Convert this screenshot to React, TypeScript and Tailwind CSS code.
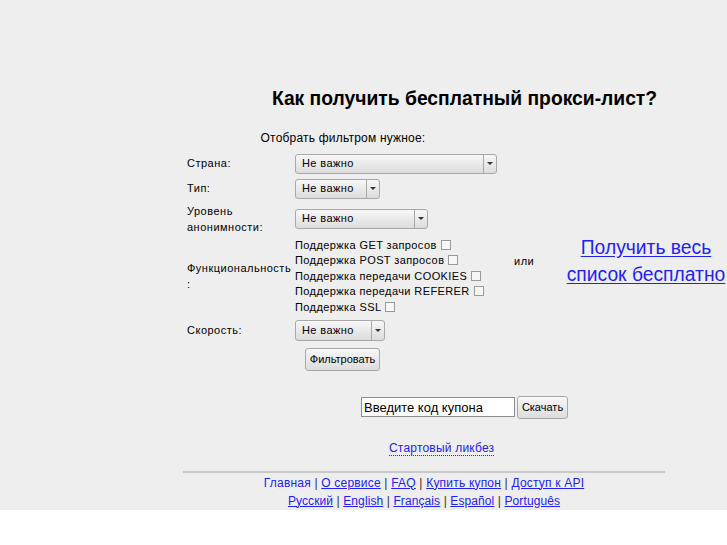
import { FunctionComponent } from "react";

const sans = "font-['Liberation_Sans',Arial,sans-serif]";

interface SelectProps {
  width: string;
}

const FakeSelect: FunctionComponent<SelectProps> = ({ width }) => (
  <div
    className={`${width} h-[20px] flex items-stretch border border-[#a9a9a9] rounded-[3px] bg-gradient-to-b from-[#f7f7f7] to-[#dcdcdc]`}
  >
    <div className="flex-1 flex items-center pl-[6px] text-[11px] tracking-[0.4px] text-black">Не важно</div>
    <div className="w-[13px] border-l border-[#a9a9a9] flex items-center justify-center">
      <span className="block w-0 h-0 border-l-[3px] border-r-[3px] border-t-[3px] border-l-transparent border-r-transparent border-t-[#333]" />
    </div>
  </div>
);

const Check: FunctionComponent<{ label: string }> = ({ label }) => (
  <div className="flex items-center h-[15.5px]">
    <span>{label}</span>
    <span className="ml-[4px] inline-block w-[10px] h-[10px] border border-[#9a9a9a] bg-[#f6f6f6]" />
  </div>
);

const footerLinks = ["О сервисе", "FAQ", "Купить купон", "Доступ к API"];
const langs = ["Русский", "English", "Français", "Español", "Português"];

const btn =
  "h-[23px] border border-[#a9a9a9] rounded-[3px] bg-gradient-to-b from-[#f7f7f7] to-[#dcdcdc] text-[11px] text-black";

export default function App() {
  return (
    <div className={`w-full min-h-[545px] bg-white overflow-hidden ${sans}`}>
      <div className="bg-[#eeeeee] h-[510px] pl-[183px] pt-[86px]">
        <div className="w-[563px]">
          <h1 className="text-center text-[19.3px] leading-[26px] font-bold text-black">
            Как получить бесплатный прокси-лист?
          </h1>

          <div className="flex mt-[18px]">
            {/* form column */}
            <div className="w-[320px] text-[11px] tracking-[0.5px] text-black">
              <div className="text-center text-[12px] leading-[16px] mb-[5px] tracking-[0.2px]">
                Отобрать фильтром нужное:
              </div>

              <div className="grid grid-cols-[112px_208px]">
                <div className="pl-[4px] h-[25px] flex items-center">Страна:</div>
                <div className="flex items-center"><FakeSelect width="w-[202px]" /></div>

                <div className="pl-[4px] h-[25px] flex items-center">Тип:</div>
                <div className="flex items-center"><FakeSelect width="w-[85px]" /></div>

                <div className="pl-[4px] h-[35px] flex flex-col justify-center leading-[16px]">
                  <span>Уровень</span>
                  <span>анонимности:</span>
                </div>
                <div className="flex items-center"><FakeSelect width="w-[133px]" /></div>

                <div className="pl-[4px] flex flex-col justify-center leading-[16px]">
                  <span>Функциональность</span>
                  <span>:</span>
                </div>
                <div className="flex flex-col pt-[1px] pb-[2px] tracking-[0.4px]">
                  <Check label="Поддержка GET запросов" />
                  <Check label="Поддержка POST запросов" />
                  <Check label="Поддержка передачи COOKIES" />
                  <Check label="Поддержка передачи REFERER" />
                  <Check label="Поддержка SSL" />
                </div>

                <div className="pl-[4px] h-[27px] flex items-center">Скорость:</div>
                <div className="flex items-center"><FakeSelect width="w-[90px] h-[21px]" /></div>

                <div />
                <div className="pt-[4px] pl-[10px]">
                  <button className={`${btn} w-[75px] tracking-normal`}>Фильтровать</button>
                </div>
              </div>
            </div>

            {/* or */}
            <div className="w-[64px] text-[11px] tracking-[0.5px] pl-[11px] pt-[123px]">или</div>

            {/* big link */}
            <div className="pt-[104px] -ml-[2px]">
              <a
                href="#"
                className="block w-[200px] text-center text-[19.3px] leading-[27px] text-[#2222ee] underline underline-offset-[2px] whitespace-nowrap"
              >
                Получить весь
                <br />
                список бесплатно
              </a>
            </div>
          </div>

          <div className="flex justify-center items-center mt-[25px] gap-[2px]">
            <input
              defaultValue="Введите код купона"
              className="w-[154px] h-[20px] border border-[#8e8e8e] bg-white px-[2px] text-[13px] text-black outline-none"
            />
            <button className={`${btn} w-[51px]`}>Скачать</button>
          </div>

          <div className="mt-[16px] pl-[206px]">
            <a
              href="#"
              className="text-[12px] leading-[16px] tracking-[0.2px] text-[#2222ee] border-b border-dotted border-[#2222ee]"
            >
              Стартовый ликбез
            </a>
          </div>
        </div>

        <div className="w-[482px] mt-[12px] border-t-2 border-[#c8c8c8]">
          <div className="text-center text-[12px] leading-[18px] pt-[1px] tracking-[0.2px] text-[#333]">
            <a href="#" className="text-[#2222ee]">Главная</a>
            {footerLinks.map((l) => (
              <span key={l}>
                {" | "}
                <a href="#" className="text-[#2222ee] underline">{l}</a>
              </span>
            ))}
          </div>
          <div className="text-center text-[12px] leading-[18px] tracking-[0.1px] text-[#333]">
            {langs.map((l, i) => (
              <span key={l}>
                {i > 0 && " | "}
                <a href="#" className="text-[#2222ee] underline">{l}</a>
              </span>
            ))}
          </div>
        </div>
      </div>
    </div>
  );
}
